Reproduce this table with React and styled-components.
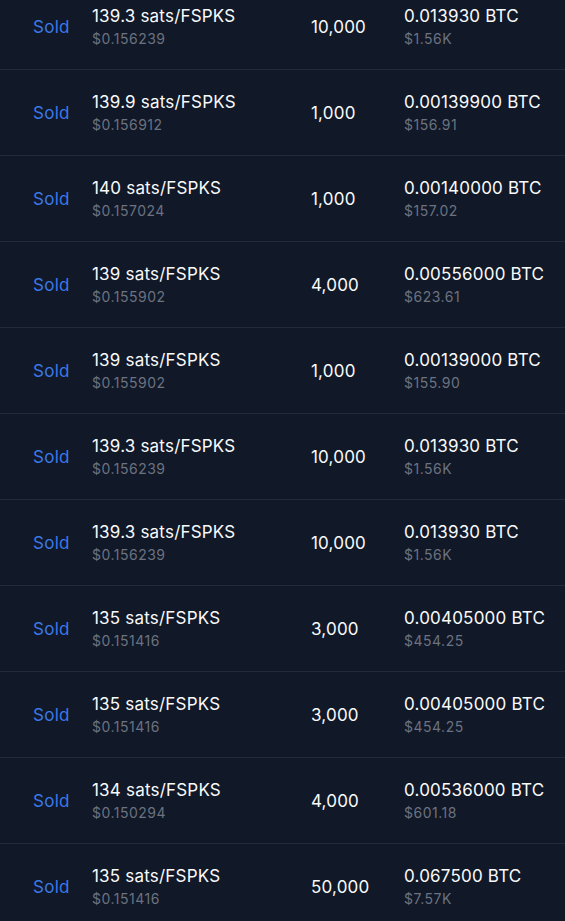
import React from "react";
import styled, { createGlobalStyle } from "styled-components";

const Global = createGlobalStyle`
  html, body { margin: 0; padding: 0; background: #111827; }
  body { font-family: Inter, "Liberation Sans", sans-serif; overflow: hidden; }
`;

const List = styled.div`
  display: flex;
  flex-direction: column;
  margin-top: -16px;
  background: #111827;
`;

const Row = styled.div`
  display: grid;
  grid-template-columns: 92px 219px 93px 1fr;
  align-items: center;
  height: 85px;
  border-bottom: 1px solid #222b3a;
`;

const Status = styled.div`
  padding-left: 33px;
  font-size: 17px;
  letter-spacing: 0.3px;
  color: #3b78e7;
`;

const Stack = styled.div`
  display: flex;
  flex-direction: column;
`;

const Main = styled.div`
  font-size: 17px;
  line-height: 24px;
  letter-spacing: 0.2px;
  color: #f9fafb;
  white-space: nowrap;
`;

const Sub = styled.div`
  font-size: 14px;
  line-height: 21px;
  letter-spacing: 0.5px;
  color: #6b7280;
  white-space: nowrap;
`;

const rows = [
  ["139.3 sats/FSPKS", "$0.156239", "10,000", "0.013930 BTC", "$1.56K"],
  ["139.9 sats/FSPKS", "$0.156912", "1,000", "0.00139900 BTC", "$156.91"],
  ["140 sats/FSPKS", "$0.157024", "1,000", "0.00140000 BTC", "$157.02"],
  ["139 sats/FSPKS", "$0.155902", "4,000", "0.00556000 BTC", "$623.61"],
  ["139 sats/FSPKS", "$0.155902", "1,000", "0.00139000 BTC", "$155.90"],
  ["139.3 sats/FSPKS", "$0.156239", "10,000", "0.013930 BTC", "$1.56K"],
  ["139.3 sats/FSPKS", "$0.156239", "10,000", "0.013930 BTC", "$1.56K"],
  ["135 sats/FSPKS", "$0.151416", "3,000", "0.00405000 BTC", "$454.25"],
  ["135 sats/FSPKS", "$0.151416", "3,000", "0.00405000 BTC", "$454.25"],
  ["134 sats/FSPKS", "$0.150294", "4,000", "0.00536000 BTC", "$601.18"],
  ["135 sats/FSPKS", "$0.151416", "50,000", "0.067500 BTC", "$7.57K"],
];

export default function App() {
  return (
    <>
      <Global />
      <List>
        {rows.map((r, i) => (
          <Row key={i}>
            <Status>Sold</Status>
            <Stack>
              <Main>{r[0]}</Main>
              <Sub>{r[1]}</Sub>
            </Stack>
            <Main>{r[2]}</Main>
            <Stack>
              <Main>{r[3]}</Main>
              <Sub>{r[4]}</Sub>
            </Stack>
          </Row>
        ))}
      </List>
    </>
  );
}
